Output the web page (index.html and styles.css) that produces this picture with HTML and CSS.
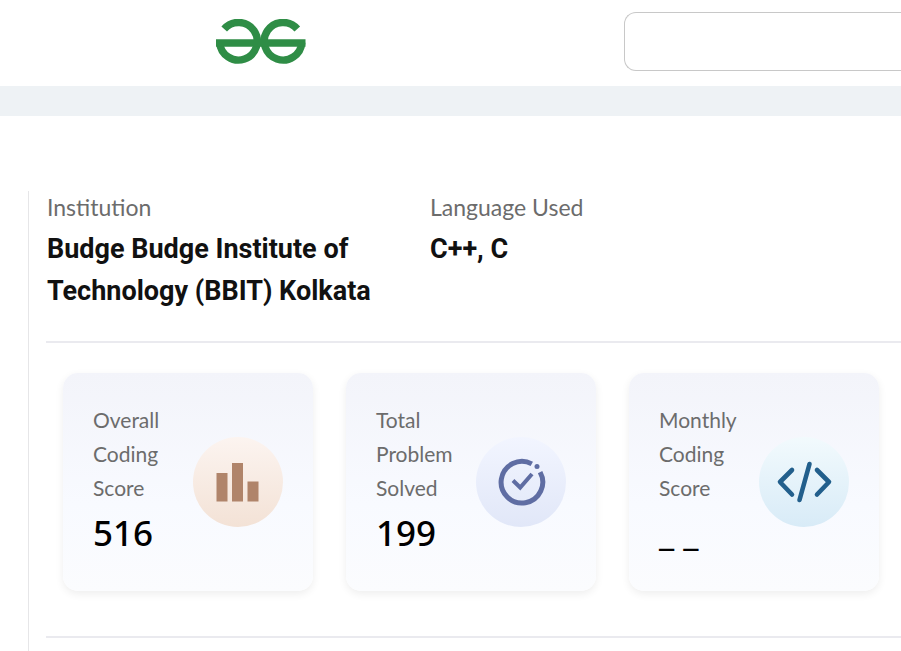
FILE: index.html
```html
<!DOCTYPE html>
<html lang="en">
<head>
<meta charset="utf-8">
<meta name="viewport" content="width=device-width, initial-scale=1">
<title>Coding Profile</title>
<link rel="stylesheet" href="styles.css">
</head>
<body>
<header class="header">
  <a class="logo" href="#" aria-label="Home">
    <svg width="90" height="46" viewBox="0 0 90 46" fill="none" stroke="#2f8d46" stroke-width="7.4">
      <path d="M8.200 10A18.800 18.800 0 1 1 3.700 23.500"/>
      <path d="M81.300 10A18.800 18.800 0 1 0 85.800 23.500"/>
      <path d="M0 24H89.500"/>
    </svg>
  </a>
  <input class="search" type="search" aria-label="Search">
</header>
<div class="band"></div>
<main class="profile">
  <dl class="info">
    <div>
      <dt class="info-label">Institution</dt>
      <dd class="info-value">Budge Budge Institute of Technology (BBIT) Kolkata</dd>
    </div>
    <div>
      <dt class="info-label">Language Used</dt>
      <dd class="info-value">C++, C</dd>
    </div>
  </dl>
  <section class="cards">
    <article class="card">
      <div class="card-text">
        <h2 class="card-label">Overall Coding Score</h2>
        <p class="card-value">516</p>
      </div>
      <span class="badge badge-score">
        <svg width="90" height="90" viewBox="0 0 90 90" fill="#b0846a">
          <path d="M23.5 36h11v28.500h-11zM39 26h11v38.500H39zM54.500 44.500h11v20h-11z"/>
        </svg>
      </span>
    </article>
    <article class="card">
      <div class="card-text">
        <h2 class="card-label">Total Problem Solved</h2>
        <p class="card-value">199</p>
      </div>
      <span class="badge badge-solved">
        <svg width="90" height="90" viewBox="0 0 90 90" fill="none" stroke="#5f6da3">
          <path d="M55.800 26.900A20.800 20.800 0 1 0 64.100 35.100" stroke-width="5"/>
          <path d="M37 43.500l7.200 7 11.800-13.500" stroke-width="4"/>
          <circle cx="61" cy="29.500" r="2.500" fill="#5f6da3" stroke="none"/>
        </svg>
      </span>
    </article>
    <article class="card">
      <div class="card-text">
        <h2 class="card-label">Monthly Coding Score</h2>
        <p class="card-value">_ _</p>
      </div>
      <span class="badge badge-monthly">
        <svg width="90" height="90" viewBox="0 0 90 90" fill="none" stroke="#225f8c" stroke-width="4.600" stroke-linecap="round" stroke-linejoin="round">
          <path d="M33 33L21 45l12 12.500M50.500 27L40.500 63M58 33l12 12-12 12.500"/>
        </svg>
      </span>
    </article>
  </section>
</main>
</body>
</html>
```
FILE: styles.css
```css
* {
  box-sizing: border-box;
}

body {
  margin: 0;
  background: #fff;
  color: #000;
  font-family: Lato, "Liberation Sans", sans-serif;
}

.header {
  display: grid;
  grid-template-columns: 408fr 277fr;
  align-items: center;
  height: 86px;
  padding: 0 0 3px 24%;
}

.logo {
  justify-self: start;
}

.logo svg,
.badge svg {
  display: block;
}

.search {
  width: 100%;
  height: 59px;
  margin: 0;
  padding: 0 20px;
  border: 1px solid #c8c8c8;
  border-right: 0;
  border-radius: 12px 0 0 12px;
  background: #fff;
  font: inherit;
  font-size: 20px;
  appearance: none;
}

.band {
  height: 30px;
  background: #eef2f5;
}

.profile {
  min-height: 460px;
  margin: 75px 0 0 28px;
  padding-left: 17px;
  border-left: 1px solid #e6e6e8;
}

.info {
  display: grid;
  grid-template-columns: 383fr 471fr;
  margin: 0;
  padding: 0 0 29px 1px;
}

.info-label {
  color: #6c6c6c;
  font-size: 23px;
  line-height: 32px;
}

.info-value {
  margin: 0;
  padding-top: 5px;
  color: #111;
  font: 700 27px/42px Roboto, "Liberation Sans", sans-serif;
}

.cards {
  display: grid;
  grid-template-columns: repeat(3, minmax(0, 1fr));
  gap: 33px;
  padding: 30px 22px 45px 17px;
  border: solid #eaeaef;
  border-width: 2px 0;
}

.card {
  display: flex;
  align-items: center;
  justify-content: space-between;
  padding: 30px;
  border-radius: 15px;
  background: linear-gradient(#f3f4fa, #f8faff 60%, #fbfcfe);
  box-shadow: 0 3px 8px rgba(0, 0, 0, 0.07);
}

.card-label {
  margin: 0;
  color: #6c6c6c;
  font-size: 21px;
  font-weight: 400;
  line-height: 34px;
}

.card-value {
  margin: 0;
  font: 500 35px/56px "Noto Sans", sans-serif;
}

.badge {
  flex: none;
  border-radius: 50%;
}

.badge-score {
  background: linear-gradient(#fcf4f0, #f3e2d6);
}

.badge-solved {
  background: linear-gradient(#f2f5ff, #e1e7f8);
}

.badge-monthly {
  background: linear-gradient(#f2fafd, #d8ebf7);
}
```
